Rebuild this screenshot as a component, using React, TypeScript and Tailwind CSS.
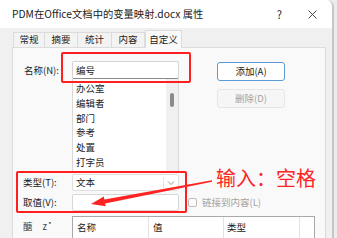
import React from "react";

const items = ["办公室", "编辑者", "部门", "参考", "处置", "打字员"];

export default function App() {
  return (
    <div className="relative w-[337px] h-[238px] overflow-hidden bg-[#ececec] font-['Noto_Sans_CJK_SC',sans-serif] text-[#1b1b1b]">
      <div className="w-[334px] h-full bg-[#f0f0f0] border-r-2 border-[#c6c6c6] rounded-tr-[7px] overflow-hidden flex flex-col">
        {/* Title bar */}
        <div className="h-[28px] shrink-0 bg-white flex items-center pl-[12px] pr-[15px]">
          <div className="flex-1 text-[10.3px] leading-none">PDM在Office文档中的变量映射.docx 属性</div>
          <div className="text-[11px] leading-none mr-[26px]">?</div>
          <svg width="9" height="9" viewBox="0 0 9 9" className="shrink-0">
            <path d="M0.5 0.5 L8.5 8.5 M8.5 0.5 L0.5 8.5" stroke="#333" strokeWidth="0.9" />
          </svg>
        </div>
        {/* Tabs */}
        <div className="h-[19px] shrink-0 flex items-end pl-[13px] text-[9.5px] leading-none">
          {["常规", "摘要", "统计", "内容"].map((t, i) => (
            <div
              key={t}
              className={
                "h-[15px] flex items-center justify-center border border-b-0 border-[#dcdcdc] bg-[#f3f3f3] " +
                (i === 0 ? "w-[32px]" : i === 1 ? "w-[33px] border-l-0" : i === 2 ? "w-[34px] border-l-0" : "w-[33px] border-l-0")
              }
            >
              {t}
            </div>
          ))}
          <div className="relative z-10 -mb-px h-[18px] w-[37px] flex items-center justify-center border border-b-0 border-[#dcdcdc] bg-[#f9f9f9]">
            自定义
          </div>
        </div>
        {/* Panel */}
        <div className="ml-[12px] w-[314px] flex-1 border border-[#dcdcdc] bg-[#f9f9f9] pt-[13px] text-[9.5px]">
          {/* Name + list + buttons */}
          <div className="flex items-start">
            <div className="w-[59px] pl-[11px] h-[18px] flex items-center">名称(N):</div>
            <div className="w-[107px]">
              <div className="h-[18px] bg-white border border-[#d4d4d4] border-b-[#8a8a8a] rounded-[2px] flex items-center pl-[3px]">编号</div>
              <div className="h-[94px] bg-white border border-t-0 border-[#d9d9d9] flex">
                <div className="flex-1 pt-[2px] pl-[3px] leading-[14.8px]">
                  {items.map((it) => (
                    <div key={it}>{it}</div>
                  ))}
                </div>
                <div className="w-[12px] bg-[#f0f0f0] flex justify-center">
                  <div className="mt-[14px] w-[4px] h-[14px] rounded-[2px] bg-[#8a8a8a]" />
                </div>
              </div>
            </div>
            <div className="ml-[38px] w-[68px] flex flex-col">
              <div className="mt-[1px] h-[19px] flex items-center justify-center bg-white border border-[#5b9ad6] rounded-[3px]">添加(A)</div>
              <div className="mt-[8px] h-[19px] flex items-center justify-center bg-[#f6f6f6] border border-[#e6e6e6] rounded-[3px] text-[#a3a3a3]">删除(D)</div>
            </div>
          </div>
          {/* Type */}
          <div className="mt-[1px] flex items-center h-[17px]">
            <div className="w-[59px] pl-[10px]">类型(T):</div>
            <div className="w-[107px] h-[17px] bg-white border border-[#dedede] rounded-[2px] flex items-center pl-[3px]">
              <span className="flex-1">文本</span>
              <div className="w-px h-[11px] bg-[#e4e4e4]" />
              <svg width="12" height="10" viewBox="0 0 12 10" className="mx-[1px]">
                <path d="M3 3.5 L6 6.5 L9 3.5" fill="none" stroke="#8a8a8a" strokeWidth="0.9" />
              </svg>
            </div>
          </div>
          {/* Value */}
          <div className="mt-[3px] flex items-center h-[17px]">
            <div className="w-[59px] pl-[10px]">取值(V):</div>
            <div className="w-[107px] h-[17px] bg-white border border-[#d6d6d6] rounded-[2px]" />
            <div className="ml-[9px] w-[9px] h-[9px] border border-[#bdbdbd] rounded-[2px] bg-[#fbfbfb]" />
            <div className="ml-[5px] text-[#a3a3a3]">链接到内容(L)</div>
          </div>
          {/* Properties table */}
          <div className="mt-[5px] flex items-start">
            <div className="w-[59px] pl-[10px] h-[21px] flex items-center text-[#444]">
              醣<span className="ml-[10px]">ż</span>
            </div>
            <div className="w-[243px] h-[30px] bg-white border border-[#a9a9a9] flex items-start">
              <div className="w-[76px] h-[21px] pl-[4px] flex items-center border-r border-[#e2e2e2]">名称</div>
              <div className="w-[75px] h-[21px] pl-[4px] flex items-center border-r border-[#e2e2e2]">值</div>
              <div className="w-[76px] h-[21px] pl-[3px] flex items-center border-r border-[#e2e2e2]">类型</div>
            </div>
          </div>
        </div>
      </div>

      {/* Annotations */}
      <div className="absolute left-[61px] top-[52px] w-[130px] h-[31px] border-2 border-[#ff1f1f] rounded-[2px]" />
      <div className="absolute left-[16px] top-[171px] w-[171px] h-[42px] border-2 border-[#ff1f1f] rounded-[2px]" />
      <svg className="absolute left-0 top-0" width="337" height="238" viewBox="0 0 337 238">
        <polygon
          points="91,204 103.8,196.5 104.4,199.4 211.9,180.3 212.1,181.7 105.1,203.4 105.7,206.3"
          fill="#ff2323"
        />
      </svg>
      <div className="absolute left-[216px] top-[165px] text-[20px] leading-[26px] text-[#ff2424] whitespace-nowrap">输入：空格</div>
    </div>
  );
}
